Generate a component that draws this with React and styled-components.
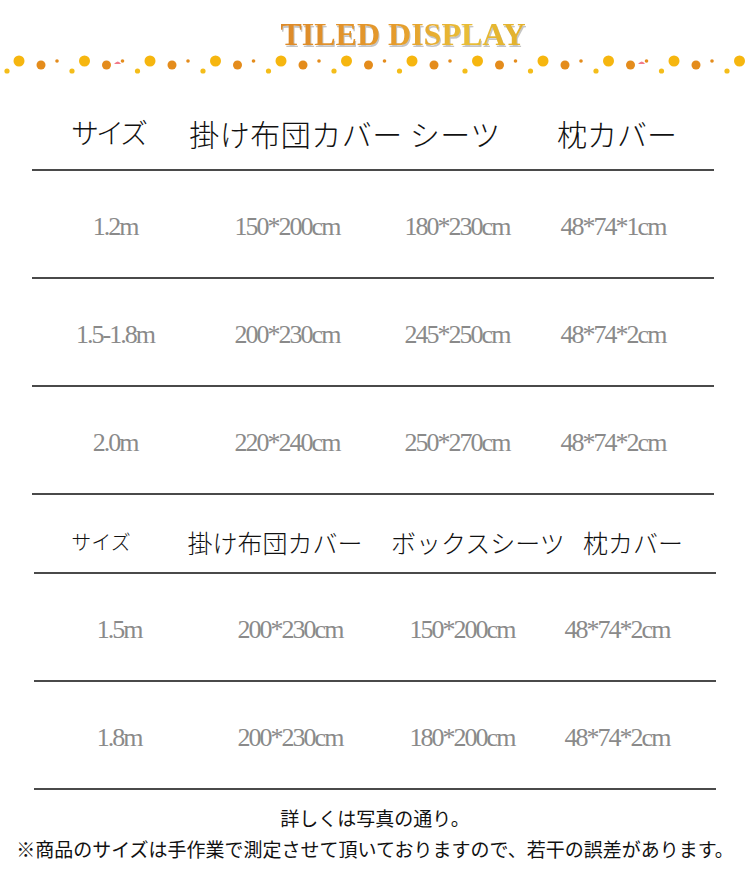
import React from 'react';
import styled, { createGlobalStyle } from 'styled-components';

const GlobalStyle = createGlobalStyle`
  body {
    margin: 0;
    background: #fff;
  }
`;

const Page = styled.div`
  width: 750px;
  background: #fff;
  font-family: "Noto Sans CJK JP", "Noto Sans", sans-serif;
`;

const Banner = styled.div`
  height: 88px;
  display: flex;
  flex-direction: column;
  align-items: center;
`;

const Title = styled.div`
  margin-top: 16px;
  height: 36px;
  font-family: "Liberation Serif", serif;
  font-weight: bold;
  font-size: 32px;
  line-height: 36px;
  letter-spacing: 0px;
  background: linear-gradient(90deg, #dd8a2a 0%, #e59a2c 45%, #e9bd36 75%, #e2b02c 100%);
  -webkit-background-clip: text;
  background-clip: text;
  color: transparent;
  filter: drop-shadow(1px 2px 0 rgba(150, 150, 150, 0.55));
  margin-left: 56px;
`;

const Dots = styled.svg`
  display: block;
  width: 750px;
  height: 36px;
`;

const Table = styled.div`
  margin-left: ${(p) => p.$left}px;
  width: 682px;
`;

const HeadRow = styled.div`
  display: grid;
  grid-template-columns: ${(p) => p.$cols};
  align-items: center;
  height: ${(p) => p.$height}px;
  padding-top: ${(p) => p.$pad}px;
  box-sizing: border-box;
  border-bottom: 2px solid #4a4a4a;
`;

const HeadCell = styled.div`
  text-align: center;
  white-space: nowrap;
  color: #111;
  font-weight: 300;
  font-size: ${(p) => p.$size}px;
  letter-spacing: ${(p) => p.$ls || 0}px;
  line-height: 1.2;
`;

const Row = styled.div`
  display: grid;
  grid-template-columns: ${(p) => p.$cols};
  align-items: center;
  height: 108px;
  padding-top: 5px;
  box-sizing: border-box;
  border-bottom: 2px solid #4a4a4a;
`;

const Cell = styled.div`
  text-align: center;
  white-space: nowrap;
  font-family: "Liberation Serif", "Times New Roman", serif;
  font-size: 26px;
  letter-spacing: -2px;
  color: #8a8a8a;
`;

const Footer = styled.div`
  padding-top: 12px;
  text-align: center;
  font-size: 19px;
  line-height: 31px;
  color: #111;
  white-space: nowrap;
`;

const firstRows = [
  ['1.2m', '150*200cm', '180*230cm', '48*74*1cm'],
  ['1.5-1.8m', '200*230cm', '245*250cm', '48*74*2cm'],
  ['2.0m', '220*240cm', '250*270cm', '48*74*2cm'],
];

const secondRows = [
  ['1.5m', '200*230cm', '150*200cm', '48*74*2cm'],
  ['1.8m', '200*230cm', '180*200cm', '48*74*2cm'],
];

const DotStrip = () => {
  const groups = [];
  for (let i = 0; i < 12; i++) {
    const x = 19 + i * 65.5;
    groups.push(
      <g key={i}>
        <circle cx={x} cy={9} r={5.5} fill="#f6b60f" />
        <circle cx={x + 22} cy={13} r={4.5} fill="#e48c1c" />
        <circle cx={x + 38} cy={9} r={1.8} fill="#e48c1c" />
        <circle cx={x + 53} cy={19} r={2.6} fill="#f4bd1a" />
      </g>
    );
  }
  return (
    <Dots viewBox="0 0 750 36">
      <circle cx={7} cy={19} r={2.6} fill="#f4bd1a" />
      {groups}
      <path d="M114 12 q4 -5 7 0 z" fill="#f27a8a" />
      <path d="M638 12 q4 -5 7 0 z" fill="#f27a8a" />
    </Dots>
  );
};

const App = () => (
  <Page>
    <GlobalStyle />
    <Banner>
      <Title>TILED DISPLAY</Title>
      <DotStrip />
    </Banner>

    <Table $left={32}>
      <HeadRow $cols="152px 322px 222px" $height={83} $pad={8}>
        <HeadCell $size={28} $ls={-3}>サイズ</HeadCell>
        <HeadCell $size={30} $ls={0.5}>掛け布団カバー シーツ</HeadCell>
        <HeadCell $size={30}>枕カバー</HeadCell>
      </HeadRow>
      {firstRows.map((r, i) => (
        <Row key={i} $cols="166px 178px 162px 150px">
          {r.map((c, j) => (
            <Cell key={j}>{c}</Cell>
          ))}
        </Row>
      ))}
    </Table>

    <Table $left={34}>
      <HeadRow $cols="134px 214px 192px 118px" $height={79} $pad={16}>
        <HeadCell $size={20}>サイズ</HeadCell>
        <HeadCell $size={25}>掛け布団カバー</HeadCell>
        <HeadCell $size={25}>ボックスシーツ</HeadCell>
        <HeadCell $size={25}>枕カバー</HeadCell>
      </HeadRow>
      {secondRows.map((r, i) => (
        <Row key={i} $cols="170px 172px 172px 138px">
          {r.map((c, j) => (
            <Cell key={j}>{c}</Cell>
          ))}
        </Row>
      ))}
    </Table>

    <Footer>
      <div>詳しくは写真の通り。</div>
      <div>※商品のサイズは手作業で測定させて頂いておりますので、若干の誤差があります。</div>
    </Footer>
  </Page>
);

export default App;
